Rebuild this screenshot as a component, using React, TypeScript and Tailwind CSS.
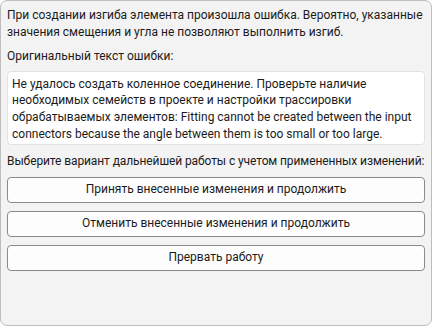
import React from "react";

const actions = [
  "Принять внесенные изменения и продолжить",
  "Отменить внесенные изменения и продолжить",
  "Прервать работу",
];

export default function App() {
  return (
    <div className="w-[432px] h-[326px] bg-[#f3f3f3] border border-[#bdbdbd] rounded-[7px] px-[6px] pt-[6px] text-[12px] leading-[16.6px] text-[#1b1b1b] font-['Roboto',sans-serif]">
      <p>
        При создании изгиба элемента произошла ошибка. Вероятно, указанные
        значения смещения и угла не позволяют выполнить изгиб.
      </p>
      <p className="mt-[8px]">Оригинальный текст ошибки:</p>
      <div className="mt-[6px] bg-white border border-[#e3e3e3] rounded-[4px] px-[4px] pt-[4px] pb-[2px]">
        Не удалось создать коленное соединение. Проверьте наличие необходимых
        семейств в проекте и настройки трассировки обрабатываемых элементов:
        Fitting cannot be created between the input connectors because the
        angle between them is too small or too large.
      </div>
      <p className="mt-[8px] whitespace-nowrap tracking-[-0.1px]">
        Выберите вариант дальнейшей работы с учетом примененных изменений:
      </p>
      <div className="mt-[7px] flex flex-col gap-[8px]">
        {actions.map((a) => (
          <button
            key={a}
            className="h-[26px] w-full bg-[#fdfdfd] border border-[#8a8a8a] rounded-[4px] text-center"
          >
            {a}
          </button>
        ))}
      </div>
    </div>
  );
}
